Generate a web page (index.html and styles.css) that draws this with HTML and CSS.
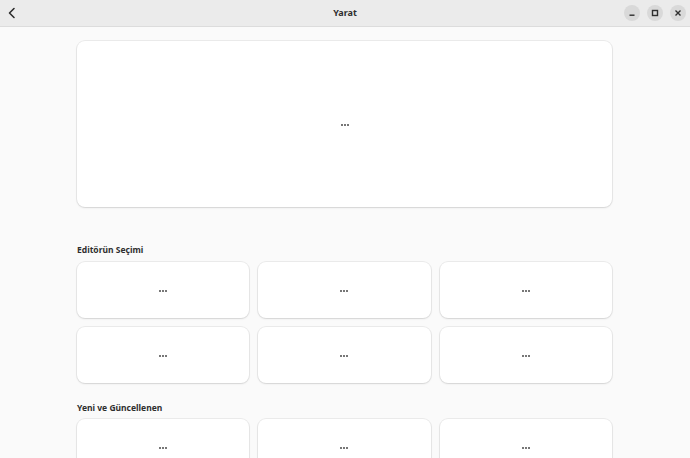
FILE: index.html
```html
<!DOCTYPE html>
<html lang="tr">
<head>
<meta charset="utf-8">
<title>Yarat</title>
<link rel="stylesheet" href="styles.css">
</head>
<body>
<header class="headerbar">
  <button class="back" aria-label="Geri">
    <svg width="10" height="12" viewBox="0 0 10 12"><path d="M7 1.5 L2.5 6 L7 10.5" fill="none" stroke="#2e2e2e" stroke-width="1.6" stroke-linecap="round" stroke-linejoin="round"/></svg>
  </button>
  <div class="title">Yarat</div>
  <div class="controls">
    <span class="wbtn"><svg width="8" height="8" viewBox="0 0 8 8"><rect x="1.5" y="5.5" width="5" height="1.4" fill="#2e2e2e"/></svg></span>
    <span class="wbtn"><svg width="8" height="8" viewBox="0 0 8 8"><rect x="1.5" y="1.5" width="5" height="5" fill="none" stroke="#2e2e2e" stroke-width="1.4"/></svg></span>
    <span class="wbtn"><svg width="8" height="8" viewBox="0 0 8 8"><path d="M1.5 1.5 L6.5 6.5 M6.5 1.5 L1.5 6.5" stroke="#2e2e2e" stroke-width="1.4"/></svg></span>
  </div>
</header>
<main class="content">
  <div class="card hero"><span class="dots"><i></i><i></i><i></i></span></div>

  <h2 class="section-title first">Editörün Seçimi</h2>
  <div class="grid">
    <div class="card tile"><span class="dots"><i></i><i></i><i></i></span></div>
    <div class="card tile"><span class="dots"><i></i><i></i><i></i></span></div>
    <div class="card tile"><span class="dots"><i></i><i></i><i></i></span></div>
    <div class="card tile"><span class="dots"><i></i><i></i><i></i></span></div>
    <div class="card tile"><span class="dots"><i></i><i></i><i></i></span></div>
    <div class="card tile"><span class="dots"><i></i><i></i><i></i></span></div>
  </div>

  <h2 class="section-title">Yeni ve Güncellenen</h2>
  <div class="grid">
    <div class="card tile"><span class="dots"><i></i><i></i><i></i></span></div>
    <div class="card tile"><span class="dots"><i></i><i></i><i></i></span></div>
    <div class="card tile"><span class="dots"><i></i><i></i><i></i></span></div>
  </div>
</main>
</body>
</html>
```
FILE: styles.css
```css
html, body {
  margin: 0;
  padding: 0;
}
body {
  background: #fafafa;
  font-family: "Noto Sans", "Open Sans", sans-serif;
  color: #2e2e2e;
  overflow: hidden;
  height: 458px;
}
.headerbar {
  height: 26px;
  background: #ebebeb;
  border-bottom: 1px solid #dcdcdc;
  display: flex;
  align-items: center;
  position: relative;
}
.back {
  border: 0;
  background: transparent;
  padding: 0;
  margin-left: 5px;
  width: 14px;
  height: 16px;
  display: flex;
  align-items: center;
  justify-content: center;
}
.title {
  position: absolute;
  left: 0;
  right: 0;
  text-align: center;
  font-weight: 700;
  font-size: 9px;
  line-height: 26px;
  pointer-events: none;
}
.controls {
  margin-left: auto;
  margin-right: 4px;
  display: flex;
  gap: 7px;
}
.wbtn {
  width: 16px;
  height: 16px;
  border-radius: 50%;
  background: #d9d9d9;
  display: flex;
  align-items: center;
  justify-content: center;
}
.content {
  margin: 0 78px 0 77px;
  padding-top: 14px;
}
.card {
  background: #ffffff;
  border-radius: 8px;
  box-shadow: 0 0 0 1px rgba(0,0,0,0.06), 0 1px 2px rgba(0,0,0,0.10);
  display: flex;
  align-items: center;
  justify-content: center;
}
.hero {
  height: 166px;
}
.dots {
  display: flex;
  gap: 1px;
  margin-top: 1px;
}
.dots i {
  display: block;
  width: 2px;
  height: 2px;
  background: #777;
}
.section-title {
  font-size: 8.5px;
  font-weight: 700;
  margin: 36px 0 5px 0;
  line-height: 14px;
  height: 14px;
}
.grid + .section-title {
  margin-top: 18px;
  margin-bottom: 4px;
}
.grid {
  display: grid;
  grid-template-columns: repeat(3, 1fr);
  gap: 9px;
}
.tile {
  height: 56px;
}
```
